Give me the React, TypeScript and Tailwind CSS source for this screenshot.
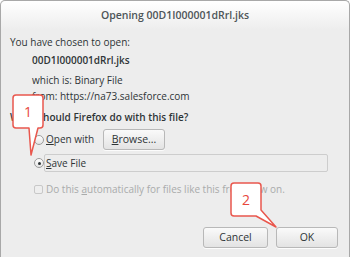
import React from "react";

const font = { fontFamily: '"Open Sans", "Noto Sans", sans-serif' };

function Radio({ checked }: { checked?: boolean }) {
  return (
    <span className="flex h-[10px] w-[10px] shrink-0 items-center justify-center rounded-full border border-[#9c9c9c] bg-gradient-to-b from-white to-[#e4e4e4]">
      {checked && <span className="h-[3px] w-[3px] rounded-full bg-[#2e3436]" />}
    </span>
  );
}

function Button({ children, className }: { children: React.ReactNode; className?: string }) {
  return (
    <button
      className={`flex h-[21px] items-center justify-center rounded-[3px] border border-[#b8b8b8] bg-gradient-to-b from-[#fafafa] to-[#e3e3e3] text-[10.5px] text-[#2e3436] shadow-[0_1px_0_rgba(255,255,255,0.8)] ${className ?? ""}`}
    >
      {children}
    </button>
  );
}

export default function App() {
  return (
    <div
      className="relative h-[257px] w-[351px] overflow-hidden bg-white text-[#2e3436]"
      style={font}
    >
      <div className="flex h-full w-[350px] flex-col rounded-t-[5px] border border-b-0 border-[#a8a8a8] bg-[#ededed]">
        {/* title bar */}
        <div className="flex h-[29px] items-center justify-center rounded-t-[5px] bg-gradient-to-b from-white to-[#ededed] text-[10.5px] font-semibold text-[#4d5558]">
          Opening 00D1I000001dRrl.jks
        </div>

        <div className="flex flex-col pl-[9px] text-[10px]">
          <div className="mt-[4px] flex h-[16px] items-center">You have chosen to open:</div>
          <div className="mt-[2px] flex h-[16px] items-center pl-[22px] font-semibold">00D1I000001dRrl.jks</div>
          <div className="mt-[4px] flex h-[16px] items-center pl-[22px]">which is: Binary File</div>
          <div className="flex h-[16px] items-center pl-[22px]">from: https://na73.salesforce.com</div>
          <div className="mt-[5px] flex h-[16px] items-center font-semibold">What should Firefox do with this file?</div>

          <div className="mt-[4px] flex h-[21px] items-center pl-[24px]">
            <Radio />
            <span className="ml-[2px] w-[57px]">
              <span className="underline">O</span>pen with
            </span>
            <Button className="w-[62px]">
              <span className="underline">B</span>rowse...
            </Button>
          </div>

          <div className="mt-[4px] flex h-[18px] items-center pl-[24px]">
            <Radio checked />
            <div className="flex h-[18px] w-[284px] items-center rounded-[2px] border border-[#cdcdcd] pl-[1px]">
              <span className="underline">S</span>ave File
            </div>
          </div>

          <div className="mt-[9px] flex h-[16px] items-center pl-[24px] text-[#a9abab]">
            <span className="h-[9px] w-[9px] shrink-0 rounded-[2px] border border-[#c8c8c8] bg-[#eeeeee]" />
            <span className="ml-[3px]">
              Do this <span className="underline">a</span>utomatically for files like this from now on.
            </span>
          </div>
        </div>

        <div className="mt-[30px] flex justify-end gap-[8px] pr-[11px]">
          <Button className="w-[65px]">Cancel</Button>
          <Button className="w-[62px]">OK</Button>
        </div>
      </div>

      {/* annotation callouts */}
      <svg className="pointer-events-none absolute left-0 top-0" width="351" height="257">
        <path
          d="M16,95 H40 Q43,95 43,98 V125 Q43,128 40,128 H38 L31,155 L29,128 H16 Q13,128 13,125 V98 Q13,95 16,95 Z"
          fill="white"
          stroke="#e9574d"
          strokeWidth="1.5"
          strokeLinejoin="round"
        />
        <text x="28" y="117" textAnchor="middle" fontSize="14" fill="#e8473c" style={font}>
          1
        </text>
        <path
          d="M234,183 H258 Q261,183 261,186 V210 L276,227 L256,216 H234 Q231,216 231,213 V186 Q231,183 234,183 Z"
          fill="white"
          stroke="#e9574d"
          strokeWidth="1.5"
          strokeLinejoin="round"
        />
        <text x="246" y="205" textAnchor="middle" fontSize="14" fill="#e8473c" style={font}>
          2
        </text>
      </svg>
    </div>
  );
}
